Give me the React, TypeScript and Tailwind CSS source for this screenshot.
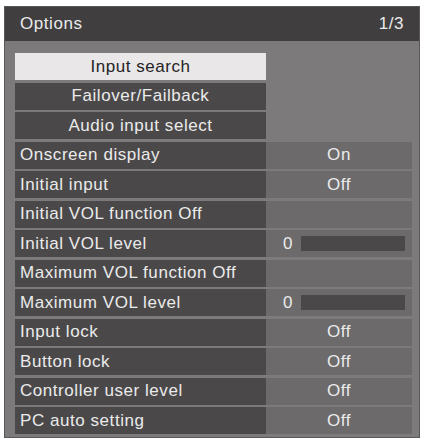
type Row = {
  label: string;
  value?: string;
  level?: boolean;
};

const buttons = ["Input search", "Failover/Failback", "Audio input select"];

const rows: Row[] = [
  { label: "Onscreen display", value: "On" },
  { label: "Initial input", value: "Off" },
  { label: "Initial VOL function Off" },
  { label: "Initial VOL level", level: true },
  { label: "Maximum VOL function Off" },
  { label: "Maximum VOL level", level: true },
  { label: "Input lock", value: "Off" },
  { label: "Button lock", value: "Off" },
  { label: "Controller user level", value: "Off" },
  { label: "PC auto setting", value: "Off" },
];

export default function App() {
  return (
    <div
      className="w-[426px] h-[443px] bg-white pt-[6px] pl-[4px] text-[17px] tracking-[0.55px] text-[#ebebeb]"
      style={{ fontFamily: '"Liberation Sans", Arial, sans-serif' }}
    >
      <div className="w-[416px] h-[432px] bg-[#7c7a7b] border border-[#5a5859]">
        {/* Header */}
        <div className="h-[34px] bg-[#403e3f] px-[15px] flex items-center justify-between">
          <span>Options</span>
          <span>1/3</span>
        </div>

        {/* Menu */}
        <div className="pt-[12px] pl-[10px] pr-[7px] flex flex-col gap-[2.5px]">
          {buttons.map((b, i) => (
            <div
              key={b}
              className={
                i === 0
                  ? "w-[251px] h-[27px] flex items-center justify-center bg-[#e9e7e8] text-[#262425]"
                  : "w-[251px] h-[27px] flex items-center justify-center bg-[#4a4849]"
              }
            >
              {b}
            </div>
          ))}

          {rows.map((r) => (
            <div key={r.label} className="h-[27px] flex">
              <div className="w-[251px] flex items-center pl-[5px] bg-[#4a4849] whitespace-nowrap">
                {r.label}
              </div>
              <div className="w-[146px] flex items-center bg-[#6c6a6b]">
                {r.value && <span className="w-full text-center">{r.value}</span>}
                {r.level && (
                  <div className="flex items-center w-full">
                    <span className="pl-[17px] w-[35px]">0</span>
                    <div className="w-[104px] h-[15px] bg-[#4a4849]" />
                  </div>
                )}
              </div>
            </div>
          ))}
        </div>
      </div>
    </div>
  );
}
